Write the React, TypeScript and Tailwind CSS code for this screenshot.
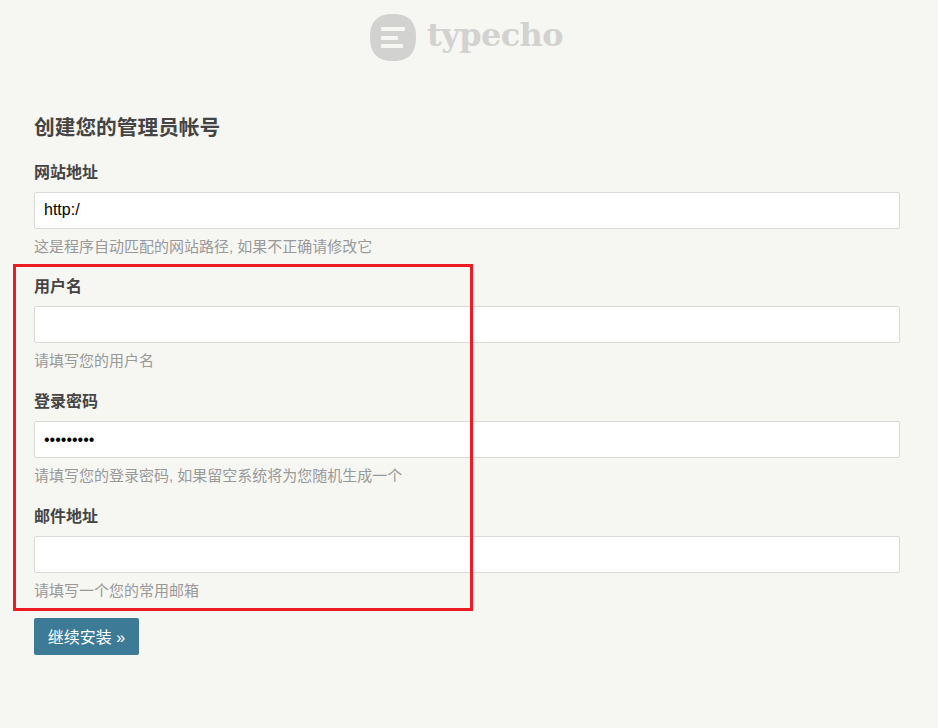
const cjk = { fontFamily: '"Liberation Sans", "Noto Sans CJK SC", sans-serif' };

function Field({ label, hint, value, type = "text" }: { label: string; hint: string; value?: string; type?: string }) {
  return (
    <div className="h-[114.67px] pt-[3px]">
      <div className="h-[24px] text-[16px] leading-[24px] font-bold text-[#444]">{label}</div>
      <input
        type={type}
        defaultValue={value}
        className="block mt-[7px] w-full h-[37px] px-[9px] bg-white border border-[#d9d9d6] rounded-[2px] text-[16px] text-black outline-none"
        style={cjk}
      />
      <div className="mt-[7px] h-[22px] text-[15px] leading-[22px] text-[#999]">{hint}</div>
    </div>
  );
}

export default function App() {
  return (
    <div className="relative h-[728px] w-[938px] overflow-hidden bg-[#f6f6f3]" style={cjk}>
      <header className="flex h-[109px] justify-center pt-[13px]">
        <div className="flex h-[48px] items-start gap-[11px] w-[198px]">
          <svg width="46" height="47" viewBox="0 0 46 47" className="mt-[1px] shrink-0">
            <path d="M23 0C38 0 46 7 46 23C46 40 38 47 23 47C8 47 0 40 0 23C0 7 8 0 23 0Z" fill="#d2d2d0" />
            <rect x="11" y="13" width="24" height="4" rx="1" fill="#f6f6f3" />
            <rect x="11" y="22" width="17" height="4" rx="1" fill="#f6f6f3" />
            <rect x="11" y="30" width="22" height="4" rx="1" fill="#f6f6f3" />
          </svg>
          <span className="text-[32px] leading-[44px] font-bold text-[#d2d2d0] whitespace-nowrap" style={{ fontFamily: '"DejaVu Serif", serif', letterSpacing: "-0.6px" }}>
            typecho
          </span>
        </div>
      </header>
      <main className="w-[866px] ml-[34px]">
        <h2 className="mt-[1px] h-[36px] text-[20.7px] leading-[36px] font-bold text-[#444]">创建您的管理员帐号</h2>
        <div className="mt-[11.7px]">
          <Field label="网站地址" value="http:/" hint="这是程序自动匹配的网站路径, 如果不正确请修改它" />
          <Field label="用户名" hint="请填写您的用户名" />
          <Field label="登录密码" type="password" value="123456789" hint="请填写您的登录密码, 如果留空系统将为您随机生成一个" />
          <Field label="邮件地址" hint="请填写一个您的常用邮箱" />
        </div>
        <button className="mt-[1.3px] flex h-[37px] w-[105px] items-center justify-center rounded-[2px] bg-[#3c7a96] pt-[3px] text-[16px] text-white">
          继续安装 »
        </button>
      </main>
      <div className="absolute left-[13px] top-[264px] h-[347px] w-[460px] border-[3px] border-[#ed1c24]" />
    </div>
  );
}
